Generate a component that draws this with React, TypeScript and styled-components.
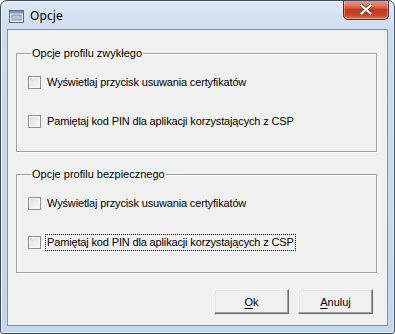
import React from "react";
import styled, { createGlobalStyle } from "styled-components";

const Global = createGlobalStyle`
  html, body { margin: 0; padding: 0; background: #ffffff; }
  body { font-family: "Liberation Sans", Arial, sans-serif; }
  * { box-sizing: border-box; }
`;

const Window = styled.div`
  width: 395px;
  height: 334px;
  border: 1px solid #3e4d5f;
  border-radius: 7px 7px 3px 3px;
  background: linear-gradient(180deg, #dce8f5 0px, #cddcee 30px, #c3d6eb 100%);
  box-shadow: inset 1px 1px 0 #eef5fc, inset -1px -1px 0 #e8f0f9;
  display: flex;
  flex-direction: column;
  overflow: hidden;
`;

const TitleBar = styled.div`
  height: 28px;
  display: flex;
  align-items: flex-start;
  padding-left: 8px;
`;

const TitleIcon = styled.svg`
  margin-top: 9px;
  width: 15px;
  height: 13px;
  flex: none;
`;

const TitleText = styled.span`
  margin-left: 6px;
  margin-top: 6px;
  font-family: "Noto Sans", "Open Sans", sans-serif;
  font-size: 12px;
  color: #000;
  letter-spacing: 0.1px;
`;

const CloseButton = styled.div`
  margin-left: auto;
  margin-right: 5px;
  margin-top: -1px;
  width: 46px;
  height: 20px;
  border: 1px solid #5c2a22;
  border-top: none;
  border-radius: 0 0 5px 5px;
  background: linear-gradient(180deg, #eba08f 0%, #d9705a 35%, #c23a22 50%, #c8462c 80%, #da7c62 100%);
  box-shadow: inset 0 0 0 1px rgba(255, 210, 200, 0.45);
  display: flex;
  align-items: center;
  justify-content: center;
`;

const Client = styled.div`
  flex: 1;
  margin: 0 6px 7px 6px;
  border: 1px solid #8193a8;
  background: #f0f0f0;
  display: flex;
  flex-direction: column;
  padding: 17px 10px 0 8px;
`;

const Group = styled.fieldset`
  margin: 0;
  padding: 0 0 0 11px;
  height: 105px;
  border: 1px solid #a0a0a0;
  box-shadow: inset 1px 1px 0 #ffffff, 1px 1px 0 #ffffff;
  display: flex;
  flex-direction: column;
  gap: 26px;
  & + & {
    margin-top: 16px;
  }
`;

const Legend = styled.legend`
  padding: 0 1px;
  margin-left: 3px;
  font-size: 11px;
  color: #000;
  line-height: 13px;
`;

const Row = styled.label<{ $first?: boolean }>`
  display: flex;
  align-items: center;
  gap: 5px;
  height: 13px;
  margin-top: ${(p) => (p.$first ? "16px" : "0")};
`;

const Box = styled.span`
  width: 13px;
  height: 13px;
  border: 1px solid #8e8f8f;
  background: linear-gradient(135deg, #d8d8d8 0%, #eeeeee 55%, #fafafa 100%);
  box-shadow: inset 0 0 0 1px #f4f4f4;
  flex: none;
`;

const LabelText = styled.span<{ $focused?: boolean }>`
  font-size: 11px;
  color: #000;
  line-height: 15px;
  padding: 0 1px;
  letter-spacing: -0.15px;
  outline: ${(p) => (p.$focused ? "1px dotted #000" : "none")};
  outline-offset: 0;
`;

const ButtonBar = styled.div`
  margin-top: 16px;
  display: flex;
  justify-content: flex-end;
  gap: 9px;
  padding-right: 4px;
`;

const Button = styled.div`
  width: 75px;
  height: 25px;
  background: #f0f0f0;
  border: 1px solid;
  border-color: #ffffff #696969 #696969 #ffffff;
  box-shadow: inset -1px -1px 0 #a0a0a0, inset 1px 1px 0 #e3e3e3;
  display: flex;
  align-items: center;
  justify-content: center;
  font-size: 11px;
  color: #000;
  u { text-decoration: underline; text-underline-offset: 2px; }
`;

const options = [
  "Wyświetlaj przycisk usuwania certyfikatów",
  "Pamiętaj kod PIN dla aplikacji korzystających z CSP",
];

export default function App() {
  return (
    <>
      <Global />
      <Window>
        <TitleBar>
          <TitleIcon viewBox="0 0 15 13">
            <rect x="0.5" y="0.5" width="14" height="12" fill="#e8eef5" stroke="#5b6c80" />
            <rect x="1" y="1" width="13" height="2.5" fill="#7d97b8" />
            <rect x="3" y="5" width="9" height="5" fill="#b9c9dc" stroke="#6e829a" strokeWidth="0.8" />
          </TitleIcon>
          <TitleText>Opcje</TitleText>
          <CloseButton>
            <svg width="12" height="11" viewBox="0 0 12 11">
              <path d="M1.5 1.5 L10.5 9.5 M10.5 1.5 L1.5 9.5" stroke="#5a231b" strokeWidth="3.6" strokeLinecap="square" />
              <path d="M1.5 1.5 L10.5 9.5 M10.5 1.5 L1.5 9.5" stroke="#ffffff" strokeWidth="2.2" strokeLinecap="square" />
            </svg>
          </CloseButton>
        </TitleBar>
        <Client>
          <Group>
            <Legend>Opcje profilu zwykłego</Legend>
            {options.map((t, i) => (
              <Row key={t} $first={i === 0}>
                <Box />
                <LabelText>{t}</LabelText>
              </Row>
            ))}
          </Group>
          <Group>
            <Legend>Opcje profilu bezpiecznego</Legend>
            {options.map((t, i) => (
              <Row key={t} $first={i === 0}>
                <Box />
                <LabelText $focused={i === 1}>{t}</LabelText>
              </Row>
            ))}
          </Group>
          <ButtonBar>
            <Button>
              <span><u>O</u>k</span>
            </Button>
            <Button>
              <span><u>A</u>nuluj</span>
            </Button>
          </ButtonBar>
        </Client>
      </Window>
    </>
  );
}
